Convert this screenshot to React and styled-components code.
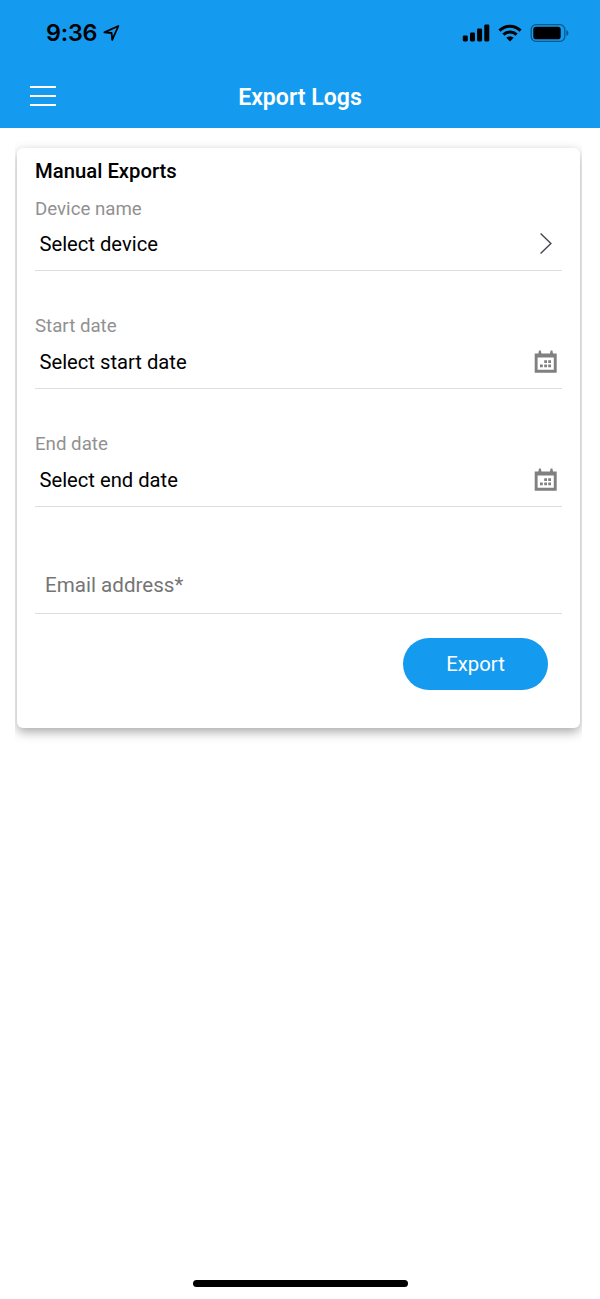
import styled, { createGlobalStyle } from "styled-components"

const GlobalStyle = createGlobalStyle`
  * {
    box-sizing: border-box;
  }

  body {
    margin: 0;
    background: #fff;
    font-family: Roboto, "Liberation Sans", sans-serif;
  }
`

const fields = [
  { id: "device", label: "Device name", value: "Select device", icon: "chevron", height: 117, rowHeight: 49, rowBottom: 5 },
  { id: "start", label: "Start date", value: "Select start date", icon: "calendar", height: 118, rowHeight: 50, rowBottom: 4 },
  { id: "end", label: "End date", value: "Select end date", icon: "calendar", height: 118, rowHeight: 50, rowBottom: 4 },
]

function LocationIcon() {
  return (
    <svg width="18" height="18" viewBox="0 0 18 18" fill="none" stroke="#000" strokeWidth="1.8" strokeLinejoin="round">
      <path d="M1.4 8.4 15.4 2 9.2 15.8 8.6 9Z" />
    </svg>
  )
}

function SignalIcon() {
  return (
    <svg width="28" height="18" viewBox="0 0 28 18">
      <rect x="0.8" y="11.4" width="5" height="6" rx="1.3" />
      <rect x="8" y="8.5" width="5" height="8.9" rx="1.3" />
      <rect x="15.1" y="4.5" width="5" height="12.9" rx="1.3" />
      <rect x="22.3" y="0.4" width="5" height="17" rx="1.3" />
    </svg>
  )
}

function WifiIcon() {
  return (
    <svg width="24" height="18" viewBox="0 0 24 18" fill="none" stroke="#000" strokeWidth="3">
      <path d="M1.5 6.6C7.4.7 16.6.7 22.5 6.6" />
      <path d="M5.4 10.6c3.7-3.6 9.5-3.6 13.2 0" />
      <path d="M12 17.5 8.3 13.8c2.1-1.9 5.3-1.9 7.4 0Z" fill="#000" stroke="none" />
    </svg>
  )
}

function BatteryIcon() {
  return (
    <svg width="39" height="18" viewBox="0 0 39 18">
      <rect x="1.2" y="0.7" width="33.6" height="16.6" rx="4.8" fill="none" stroke="#0b5788" strokeWidth="1.3" />
      <rect x="3.3" y="2.8" width="27.4" height="12.4" rx="2.8" />
      <path d="M36.4 6c2.6.8 2.6 5.2 0 6Z" fill="#0b5788" />
    </svg>
  )
}

function ChevronIcon() {
  return (
    <svg width="24" height="24" viewBox="0 0 24 24" fill="none" stroke="#454553" strokeWidth="1.4">
      <path d="m6.6 1.6 10.3 10-10.3 10" />
    </svg>
  )
}

function CalendarIcon() {
  return (
    <svg width="24" height="24" viewBox="0 0 24 24" fill="#808080">
      <path fillRule="evenodd" d="M.7 3.6h22v19.2H.7ZM3.6 7.6v12.2h16.2V7.6Z" />
      <path d="M4.2 4.5 5 .6h1.8l.8 3.9ZM15.8 4.5l.8-3.9h1.8l.8 3.9Z" />
      <path d="M10.2 10.3H13v2.8h-2.8ZM14.2 10.3H17v2.8h-2.8ZM6 14.4h2.8v2.8H6ZM10.2 14.4H13v2.8h-2.8ZM14.2 14.4H17v2.8h-2.8Z" />
    </svg>
  )
}

function SelectField({ label, value, icon, height, rowHeight, rowBottom }) {
  return (
    <Field $height={height}>
      <Label>{label}</Label>
      <SelectRow $height={rowHeight} $bottom={rowBottom}>
        <Value>{value}</Value>
        {icon === "chevron" ? <ChevronIcon /> : <CalendarIcon />}
      </SelectRow>
    </Field>
  )
}

export default function ExportLogsPage() {
  return (
    <>
      <GlobalStyle />
      <Screen>
        <Header>
          <StatusBar>
            <Clock>
              <Time>9:36</Time>
              <LocationIcon />
            </Clock>
            <StatusIcons>
              <SignalIcon />
              <WifiIcon />
              <BatteryIcon />
            </StatusIcons>
          </StatusBar>
          <TitleBar>
            <MenuButton aria-label="Menu">
              <MenuLine />
              <MenuLine />
              <MenuLine />
            </MenuButton>
            <Title>Export Logs</Title>
          </TitleBar>
        </Header>
        <CardArea>
          <Card>
            <CardTitle>Manual Exports</CardTitle>
            {fields.map((field) => (
              <SelectField key={field.id} {...field} />
            ))}
            <EmailInput type="email" placeholder="Email address*" />
            <ExportButton>Export</ExportButton>
          </Card>
        </CardArea>
        <HomeIndicator />
      </Screen>
    </>
  )
}

const Screen = styled.div`
  height: 1299px;
  display: flex;
  flex-direction: column;
  background: #fff;
`

const Header = styled.header`
  height: 127.5px;
  background: #149aef;
`

const StatusBar = styled.div`
  height: 64px;
  padding: 2px 31px 0 46px;
  display: flex;
  align-items: center;
  justify-content: space-between;
`

const Clock = styled.div`
  display: flex;
  align-items: center;
  gap: 5px;
`

const Time = styled.span`
  width: 52px;
  font-family: Inter, sans-serif;
  font-size: 23.3px;
  font-weight: 600;
  letter-spacing: -0.2px;
  line-height: 28px;
  white-space: nowrap;
`

const StatusIcons = styled.div`
  display: flex;
  align-items: center;
  gap: 8px;
`

const TitleBar = styled.div`
  height: 63px;
  padding: 0 30px;
  display: grid;
  grid-template-columns: 26px 1fr 26px;
  align-items: center;
`

const MenuButton = styled.button`
  width: 26px;
  height: 20px;
  padding: 0;
  border: 0;
  background: none;
  display: flex;
  flex-direction: column;
  justify-content: space-between;
`

const MenuLine = styled.span`
  width: 26px;
  height: 2px;
  background: #fff;
`

const Title = styled.h1`
  margin: 0;
  padding-top: 5px;
  color: #fff;
  font-size: 23.1px;
  font-weight: 600;
  line-height: 28px;
  text-align: center;
`

/* clips the card shadow close to the sides */
const CardArea = styled.main`
  margin: 0.5px 18px 0 15px;
  padding: 20px 2px 26px;
  overflow: hidden;
`

const Card = styled.section`
  height: 580px;
  padding: 9px 18px 0;
  display: flex;
  flex-direction: column;
  background: #fff;
  border-radius: 6px;
  box-shadow: 0 4px 11px rgba(0, 0, 0, 0.34);
`

const CardTitle = styled.h2`
  margin: 0 0 11px;
  font-size: 20.3px;
  font-weight: 500;
  line-height: 28px;
`

const Field = styled.div`
  height: ${(props) => props.$height}px;
`

const Label = styled.div`
  color: #919191;
  font-size: 18.7px;
  line-height: 26px;
`

const SelectRow = styled.div`
  height: ${(props) => props.$height}px;
  padding: 0 4px ${(props) => props.$bottom}px 4.5px;
  display: flex;
  align-items: center;
  justify-content: space-between;
  border-bottom: 1.5px solid #dedede;
`

const Value = styled.span`
  font-size: 20.2px;
`

const EmailInput = styled.input`
  height: 62px;
  margin-top: 3px;
  padding: 4px 10px 0;
  border: 0;
  border-bottom: 1.5px solid #dedede;
  background: none;
  font-family: inherit;
  font-size: 20.6px;

  &::placeholder {
    color: #757575;
  }
`

const ExportButton = styled.button`
  width: 145px;
  height: 52px;
  margin: 23.5px 14px 0 auto;
  padding: 0;
  border: 0;
  border-radius: 26px;
  background: #149aef;
  color: #fff;
  font-family: inherit;
  font-size: 20.3px;
`

const HomeIndicator = styled.div`
  width: 215px;
  height: 7px;
  margin: auto auto 12px;
  border-radius: 4px;
  background: #000;
`
